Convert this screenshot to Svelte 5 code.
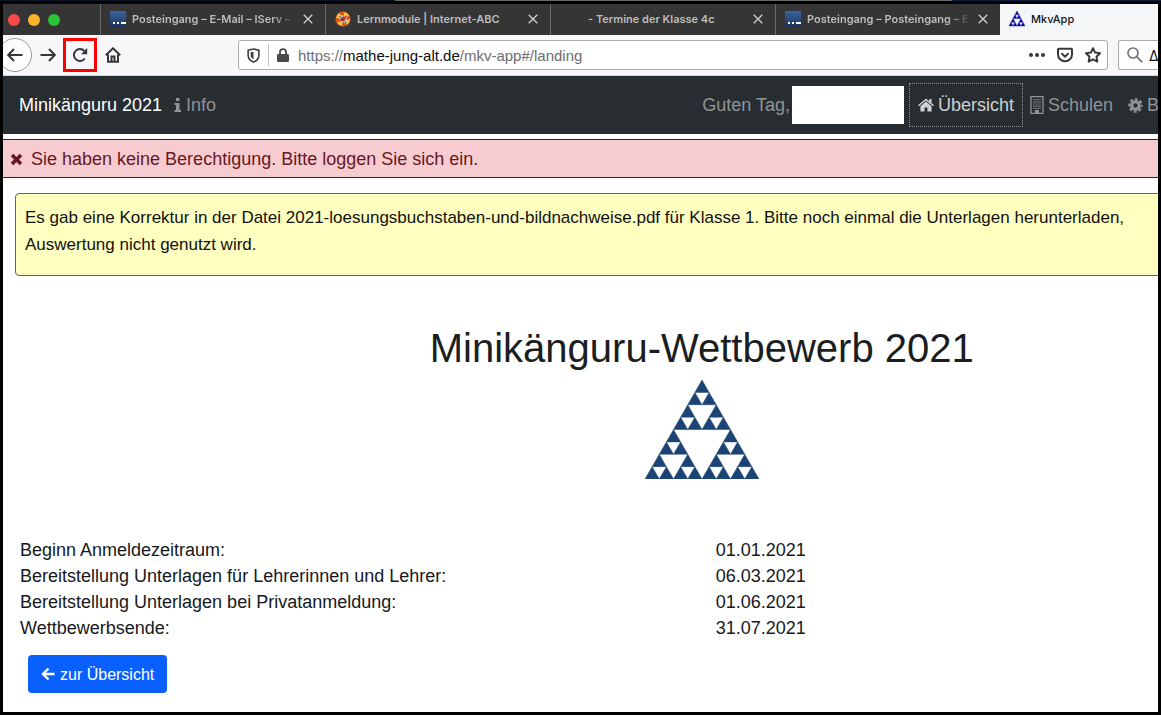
<script>
  const tabs = [
    { title: 'Posteingang – E-Mail – IServ – e', icon: 'iserv', fade: true },
    { title: 'Lernmodule | Internet-ABC', icon: 'abc' },
    { title: '- Termine der Klasse 4c', icon: 'blank' },
    { title: 'Posteingang – Posteingang – E-', icon: 'iserv', fade: true }
  ];

  const dates = [
    ['Beginn Anmeldezeitraum:', '01.01.2021'],
    ['Bereitstellung Unterlagen für Lehrerinnen und Lehrer:', '06.03.2021'],
    ['Bereitstellung Unterlagen bei Privatanmeldung:', '01.06.2021'],
    ['Wettbewerbsende:', '31.07.2021']
  ];

  // Splits a triangle into its three corner triangles, depth times over.
  function sierpinski(x, y, w, h, depth) {
    if (depth === 0) return `M${x + w / 2} ${y}L${x + w} ${y + h}H${x}Z`;
    return (
      sierpinski(x + w / 4, y, w / 2, h / 2, depth - 1) +
      sierpinski(x, y + h / 2, w / 2, h / 2, depth - 1) +
      sierpinski(x + w / 2, y + h / 2, w / 2, h / 2, depth - 1)
    );
  }

  const logo = sierpinski(0, 0, 114, 99, 3);
  const tabLogo = sierpinski(0, 0, 16, 15, 2);
</script>

<div class="strip"></div>
<div class="window">
  <div class="tabs">
    <div class="lights"><i class="red"></i><i class="amber"></i><i class="green"></i></div>
    {#each tabs as tab}
      <div class="tab">
        {#if tab.icon === 'iserv'}
          <svg class="fav" viewBox="0 0 16 16" aria-hidden="true">
            <defs><linearGradient id="blue" x1="0" y1="0" x2="0" y2="1"><stop offset="0" stop-color="#3a66a4" /><stop offset="1" stop-color="#1d3157" /></linearGradient></defs>
            <rect width="16" height="16" fill="url(#blue)" />
            <path d="M3 11h2v2H3zM7 11h2v2H7zM11 11h5v2h-5z" fill="#fff" />
          </svg>
        {:else if tab.icon === 'abc'}
          <svg class="fav" viewBox="0 0 16 16" aria-hidden="true">
            <circle cx="8" cy="8" r="7.6" fill="#d8541f" />
            <circle cx="8" cy="8" r="5.5" fill="none" stroke="#f6c53c" stroke-width="3" stroke-dasharray="5 3.6" />
            <circle cx="8" cy="8" r="4" fill="#e9e1d5" />
            <path d="M8 2v12M2 8h12" stroke="#a9431f" stroke-width="1" />
            <path d="M3.5 11 7 6.500 12.500 4.500 9 9.500Z" fill="#c5301c" />
            <path d="M4.500 5 11 11.500" stroke="#2b3b45" stroke-width="1" />
          </svg>
        {:else}
          <span class="fav"></span>
        {/if}
        <span class="tab-title" class:fade={tab.fade} class:indent={tab.icon === 'blank'}>{tab.title}</span>
        <button class="close" aria-label="Tab schließen">
          <svg viewBox="0 0 10 10" width="10" height="10"><path d="M.7.7l8.600 8.600M9.300.7L.7 9.300" stroke="#d0d0d0" stroke-width="1.300" /></svg>
        </button>
      </div>
    {/each}
    <div class="tab active">
      <svg class="fav" viewBox="0 0 16 16" aria-hidden="true"><path d={tabLogo} fill="#0b0b9c" stroke="#0b0b9c" stroke-width=".4" /></svg>
      <span class="tab-title">MkvApp</span>
    </div>
  </div>

  <div class="toolbar">
    <button class="back" aria-label="Zurück">
      <svg viewBox="0 0 16 16"><path d="M15.500 8H1.500M7 2 1.200 8 7 14" /></svg>
    </button>
    <button class="tool" aria-label="Vor">
      <svg viewBox="0 0 16 16"><path d="M.5 8h14M9 2l5.800 6L9 14" /></svg>
    </button>
    <button class="tool reload" aria-label="Neu laden">
      <svg viewBox="0 0 16 16"><path d="M12.800 11.500A6 6 0 1 1 12.400 4" /><path d="M15.200 1v6.200H9z" class="solid" /></svg>
    </button>
    <button class="tool" aria-label="Startseite">
      <svg viewBox="0 0 16 16"><path d="M.8 8.300 8 1.300l7.200 7M3 7.500v7.300h10V7.500" /><path d="M6.500 15V9.500h3V15" /></svg>
    </button>
    <div class="url">
      <svg class="shield" viewBox="0 0 12 14" aria-hidden="true"><path d="M6 .9 11 2v4.500c0 3.200-2 5.500-5 6.600C3 12 1 9.700 1 6.500V2z" fill="none" stroke="#3f3f42" stroke-width="1.500" /><path d="M6 3.400v7.100C4.200 9.500 3.300 8.300 3.300 6.200V4z" fill="#3f3f42" /></svg>
      <span class="bar"></span>
      <svg class="lock" viewBox="0 0 12 14" aria-hidden="true"><path d="M3 7V4.200a3 3 0 0 1 6 0V7" fill="none" stroke="#4a4a4d" stroke-width="1.800" /><rect y="6" width="12" height="8" rx="1.300" fill="#4a4a4d" /></svg>
      <a class="address" href="#/landing">https://<b>mathe-jung-alt.de</b>/mkv-app#/landing</a>
      <button class="mini" aria-label="Seitenaktionen">
        <svg viewBox="0 0 16 16"><g class="solid"><circle cx="2" cy="8" r="2" /><circle cx="8" cy="8" r="2" /><circle cx="14" cy="8" r="2" /></g></svg>
      </button>
      <button class="mini" aria-label="Pocket">
        <svg viewBox="0 0 16 16"><path d="M1.800 1.800h12.400q.8 0 .8.800V7.500a7 6.800 0 0 1-14 0V2.600q0-.8.800-.8zM4.500 6.300 8 9.700l3.500-3.400" /></svg>
      </button>
      <button class="mini" aria-label="Lesezeichen">
        <svg viewBox="0 0 16 16"><path d="M8 1.200l2.100 4.400 4.900.7-3.500 3.400.8 4.900L8 12.300l-4.300 2.300.8-4.900L1 6.300l4.900-.7z" stroke-linejoin="round" /></svg>
      </button>
    </div>
    <label class="search">
      <svg viewBox="0 0 16 16" width="16" height="16"><circle cx="6" cy="6" r="5" fill="none" stroke="#77777a" stroke-width="1.700" /><path d="M9.700 9.700l5.600 5.600" stroke="#77777a" stroke-width="1.800" /></svg>
      <input value="Δ" aria-label="Suche" />
    </label>
  </div>

  <nav>
    <a class="brand" href="#/landing">Minikänguru 2021</a>
    <a href="#/info">
      <svg width="8" height="14" viewBox="0 0 8 14" aria-hidden="true"><path d="M2 0h3.500v3H2zM.5 5h5v7H7v2H.5v-2H2V7H.5z" fill="currentColor" /></svg>
      Info</a>
    <span class="greeting">Guten Tag,</span>
    <span class="name"></span>
    <a class="current" href="#/uebersicht">
      <svg width="16" height="14" viewBox="0 0 16 14" aria-hidden="true"><path d="M8 .5 0 7.300l.9 1L8 2.400l7.100 5.900.9-1-2.500-2.200V1h-2.200v2.300zM8 3.600 2.400 8.200V13.500h4.200V9.500h2.800v4h4.200V8.200z" fill="currentColor" /></svg>
      Übersicht</a>
    <a class="schools" href="#/schulen">
      <svg width="14" height="18" viewBox="0 0 14 18" aria-hidden="true"><path d="M1 .7h12v16.600H1z" fill="none" stroke="currentColor" stroke-width="1.300" /><path d="M4 3v10M6 3v10M8 3v10M10 3v10" stroke="currentColor" stroke-width="1.200" stroke-dasharray="1.200 1" /><path d="M5 14h4v3H5z" fill="currentColor" /></svg>
      Schulen</a>
    <a class="last" href="#/b">
      <svg width="15" height="15" viewBox="0 0 16 16" aria-hidden="true"><g fill="none" stroke="currentColor"><circle cx="8" cy="8" r="4" stroke-width="3.400" /><circle cx="8" cy="8" r="6.500" stroke-width="2.600" stroke-dasharray="3 2.105" stroke-dashoffset="1.500" /></g></svg>
      B</a>
  </nav>

  <main>
    <div class="alert" role="alert">
      <svg width="13" height="13" viewBox="0 0 13 13" aria-hidden="true"><path d="M2 2l9 9M11 2l-9 9" stroke="currentColor" stroke-width="3.600" /></svg>
      Sie haben keine Berechtigung. Bitte loggen Sie sich ein.
    </div>
    <div class="note">
      Es gab eine Korrektur in der Datei 2021-loesungsbuchstaben-und-bildnachweise.pdf für Klasse 1. Bitte noch einmal die Unterlagen herunterladen,<br />Auswertung nicht genutzt wird.
    </div>
    <h1>Minikänguru-Wettbewerb 2021</h1>
    <svg class="logo" width="114" height="99" viewBox="0 0 114 99" role="img" aria-label="Logo"><path d={logo} fill="#1b4474" stroke="#1b4474" stroke-width=".5" /></svg>
    <table>
      <tbody>
        {#each dates as [label, date]}
          <tr><th scope="row">{label}</th><td>{date}</td></tr>
        {/each}
      </tbody>
    </table>
    <button class="primary">
      <svg width="14" height="14" viewBox="0 0 14 14" aria-hidden="true"><path d="M13.500 7H2.500M7.500 1.500 2 7l5.500 5.500" fill="none" stroke="currentColor" stroke-width="2.400" /></svg>
      zur Übersicht
    </button>
  </main>
</div>

<style>
  :global(body) { margin: 0; background: #fff; overflow: hidden; }
  * { box-sizing: border-box; }
  button { margin: 0; padding: 0; border: 0; background: none; font: inherit; color: inherit; }
  a { color: inherit; text-decoration: none; white-space: nowrap; }
  svg { display: block; flex: none; }

  .strip { height: 1px; background: linear-gradient(90deg, #0b1526 34%, #666a66 34%, #666a66 82%, #0b1e42 82%); }
  .window {
    min-height: calc(100vh - 3px);
    border: 3px solid #000;
    overflow: hidden;
    font: 18px/27px "Liberation Sans", Arial, sans-serif;
    color: #212529;
    background: #fff;
  }

  .tabs { display: flex; height: 31px; background: #353535; font: 600 11px/16px Inter, sans-serif; color: #bcbcbc; }
  .lights { display: flex; flex: none; align-items: center; gap: 8px; width: 97px; padding-left: 5px; }
  .lights i { width: 12px; height: 12px; border-radius: 50%; }
  .red { background: #fc4848; }
  .amber { background: #fdb32b; }
  .green { background: #2bc537; }
  .tab { display: flex; flex: 1 1 225px; align-items: center; gap: 6px; min-width: 0; padding: 0 11px 1px 9px; border-left: 1px solid #6a6a6a; }
  .fav { width: 16px; height: 16px; flex: none; }
  .tab-title { flex: 1; min-width: 0; overflow: hidden; white-space: nowrap; }
  .indent { padding-left: 6px; }
  .fade { mask-image: linear-gradient(90deg, #000 85%, transparent); }
  .close { width: 12px; height: 16px; display: grid; place-items: center; }
  .active { flex-basis: 158px; border-left: 0; background: #f5f6f8; color: #151515; font-weight: 500; }

  .toolbar { display: flex; align-items: center; height: 41px; background: #f7f7f9; border-bottom: 1px solid #d5d5d8; overflow: hidden; }
  .toolbar button svg { width: 16px; height: 16px; fill: none; stroke: #38383b; stroke-width: 2; }
  .toolbar button .solid { fill: #38383b; stroke: none; }
  .back { display: grid; place-items: center; flex: none; width: 34px; height: 34px; margin-left: -5px; border: 1px solid #9b9b9e; border-radius: 50%; background: #fdfdfe; }
  .tool { display: grid; place-items: center; flex: none; width: 31px; height: 34px; }
  .reload { width: 34px; border: 3px solid #f00; }
  .url { display: flex; flex: 1; align-items: center; min-width: 0; height: 30px; margin-left: 110px; padding: 0 0 0 8px; border: 1px solid #ababae; border-radius: 3px; background: #fff; }
  .shield { width: 13px; height: 15px; }
  .bar { width: 1px; height: 22px; margin: 0 8px; background: #c0c0c3; }
  .lock { width: 12px; height: 14px; margin-right: 9px; }
  .address { flex: 1; min-width: 0; padding-top: 2px; overflow: hidden; font: 15px/20px "Liberation Sans", Arial, sans-serif; color: #6d6d70; }
  .address b { font-weight: 400; color: #0c0c0d; }
  .mini { display: grid; place-items: center; width: 28px; height: 28px; }
  .search { display: flex; align-items: center; flex: none; gap: 6px; width: 40px; height: 30px; margin-left: 10px; padding-left: 8px; border: 1px solid #ababae; border-right: 0; border-radius: 3px 0 0 3px; background: #fff; overflow: hidden; }
  .search input { width: 40px; flex: none; padding: 2px 0 0; border: 0; outline: 0; background: none; font: 14px/20px Inter, sans-serif; color: #0c0c0d; }

  nav { display: flex; align-items: center; height: 58px; padding-left: 16px; background: #282d31; color: #919496; overflow: hidden; }
  nav a { display: flex; align-items: center; gap: 4px; }
  .brand { margin-right: 12px; color: #fff; }
  .greeting { margin-left: auto; white-space: nowrap; }
  .name { flex: none; width: 112px; height: 38px; margin: 0 5px 0 2px; background: #fff; }
  .current { height: 44px; padding: 0 8px; border: 1px dotted #919496; color: #cfd0d1; }
  .schools { margin: 0 15px 0 7px; }
  .last { width: 30px; }

  /* The page is wider than the window and runs on past its right edge. */
  main { width: 121%; padding-top: 5px; }
  .alert { display: flex; align-items: center; gap: 8px; height: 39px; padding: 1px 0 0 7px; border: solid #4f161f; border-width: 1px 0; background: #f6ccd1; color: #671822; }
  .note { height: 83px; margin: 15px 12px 0; padding: 10px 9px; border: 1px solid #64645a; border-radius: 4px; background: #ffffbf; color: #111; font-size: 17px; white-space: nowrap; }
  h1 { margin: 47px 0 7px; font-size: 40px; line-height: 50px; font-weight: 400; text-align: center; color: #1b1e21; }
  .logo { margin: 0 auto; }
  table { width: 100%; margin-top: 58px; border-collapse: collapse; table-layout: fixed; line-height: 26px; color: #16191c; }
  th, td { padding: 0 0 0 17px; text-align: left; font-weight: 400; }
  td { padding-left: 14px; }
  .primary { display: flex; align-items: center; gap: 5px; height: 38px; margin: 14px 0 0 25px; padding: 0 13px; border-radius: 4px; background: #0a5fff; color: #fff; font-size: 16px; }
</style>
